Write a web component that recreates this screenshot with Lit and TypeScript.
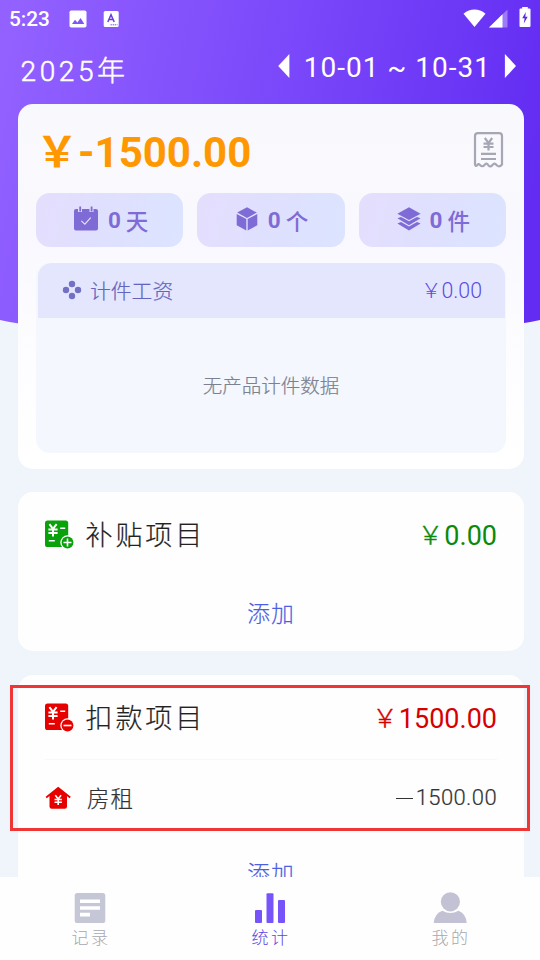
import { LitElement, html, svg, css } from "lit";
import { customElement, property } from "lit/decorators.js";

const yen = (x: number, y: number, s: number, w = 1.8) => svg`
  <g transform="translate(${x} ${y}) scale(${s})" fill="none" stroke="#fff" stroke-width=${w}>
    <path d="M-3.6 -6L0 -1.4L3.6 -6M0 -1.4V6.2M-4.6 -0.6H4.6M-4.6 2.8H4.6"/>
  </g>`;

const billIcon = (color: string, plus: boolean) => html`
  <svg class="bill" width="30" height="30" viewBox="0 0 30 30">
    <rect x="0" y="0.5" width="23.2" height="26.6" rx="2.6" fill=${color} />
    ${yen(8, 10.2, 1, 2)}
    <path d="M15.2 8.2h5M3.8 20.7h6" stroke="#fff" stroke-width="1.5" />
    <circle cx="22.5" cy="22.5" r="7.2" fill="#fff" />
    <circle cx="22.5" cy="22.5" r="5.9" fill=${color} />
    <path d=${plus ? "M18.5 22.5h8M22.5 18.5v8" : "M18.5 22.5h8"} stroke="#fff" stroke-width="1.6" />
  </svg>`;

const calendarIcon = html`
  <svg width="26" height="26" viewBox="0 0 26 26">
    <rect x="1" y="3" width="24" height="21.5" rx="2" fill="#7f6bd6" />
    <path d="M7 1v5M18.5 1v5" stroke="#e2ddfc" stroke-width="4" />
    <path d="M7.2 0.5v5M18.6 0.5v5" stroke="#7f6bd6" stroke-width="1.8" />
    <path d="M8.3 14.8l3.6 3.4 5.8-6.6" fill="none" stroke="#e6e2fd" stroke-width="1.1" />
  </svg>`;

const boxIcon = html`
  <svg width="23" height="24" viewBox="0 0 23 24">
    <path d="M11 0.3L20.8 5.6L11 10.9L1.2 5.6Z" fill="#7f6bd6" />
    <path d="M0.7 7L10.3 12.1V23.4L0.7 18.2ZM21.3 7L11.7 12.1V23.4L21.3 18.2Z" fill="#7f6bd6" />
  </svg>`;

const layersIcon = html`
  <svg width="24" height="24" viewBox="0 0 24 24" fill="#7f6bd6">
    <path d="M12 0.3L23.6 6.7L12 13.1L0.4 6.7Z" />
    <path d="M0.4 11.2L4 9.9L12 14.2L20 9.9L23.6 11.2L12 18.2Z" />
    <path d="M0.4 16.5L4 15L12 19.4L20 15L23.6 16.5L12 23.6Z" />
  </svg>`;

@customElement("stat-pill")
class StatPill extends LitElement {
  @property({ attribute: false }) icon: unknown;
  @property() unit = "";

  static styles = css`
    :host {
      box-sizing: border-box;
      flex: 1;
      height: 54px;
      padding: 0 0 1px 2px;
      border-radius: 14px;
      background: linear-gradient(105deg, #e5defd 0%, #dfe0fe 45%, #dce4fe 100%);
      display: flex;
      justify-content: center;
      align-items: center;
      color: #7f6bd6;
      font: 700 22.5px/54px Roboto, "Noto Sans CJK SC", sans-serif;
    }
    svg {
      display: block;
    }
    .icon {
      display: flex;
      padding-bottom: 2px;
      margin-right: 9px;
    }
    .unit {
      margin-left: 5px;
      font: 500 22.5px/50px "Noto Sans CJK SC", sans-serif;
    }
  `;

  render() {
    return html`<span class="icon">${this.icon}</span><span>0</span><span class="unit">${this.unit}</span>`;
  }
}

@customElement("app-root")
class AppRoot extends LitElement {
  static styles = css`
    :host {
      position: relative;
      display: flex;
      flex-direction: column;
      width: 540px;
      height: 960px;
      overflow: hidden;
      background: #f0f4fb;
      font-family: Roboto, "Noto Sans CJK SC", sans-serif;
    }
    svg {
      display: block;
      flex: none;
    }
    .cjk {
      font-family: "Noto Sans CJK SC", sans-serif;
    }
    .backdrop {
      position: absolute;
      left: -30px;
      right: -30px;
      top: 0;
      height: 338px;
      border-radius: 0 0 50% 50% / 0 0 32px 32px;
      background: linear-gradient(103deg, #9261ff 7%, #7a47fa 50%, #622cf2 90%);
    }
    .status {
      position: relative;
      display: flex;
      align-items: center;
      height: 37px;
      padding: 0 9px 0 9px;
      color: #fff;
      font: 500 20.8px/38px Roboto, sans-serif;
    }
    .status .image {
      margin-left: 19.5px;
    }
    .status .lang {
      margin-left: 16px;
    }
    .status .wifi {
      margin-left: auto;
      margin-top: -2px;
    }
    .status .signal {
      margin-left: 3px;
      margin-top: -2px;
    }
    .status .battery {
      margin-left: 11px;
      margin-top: -3px;
    }
    .period {
      position: relative;
      display: flex;
      justify-content: space-between;
      height: 67px;
      padding: 0 24px 0 20.5px;
      color: #fff;
      font-size: 28px;
      line-height: 32px;
    }
    .year {
      padding-top: 19px;
      letter-spacing: 3.6px;
      font-weight: 300;
      -webkit-text-stroke: 0.5px #fff;
    }
    .range {
      display: flex;
      align-items: center;
      height: 32px;
      padding-top: 13px;
      letter-spacing: 1px;
    }
    .range .dates {
      margin: 4px 13px 0 14px;
      white-space: pre;
    }
    .card {
      position: relative;
      box-sizing: border-box;
      flex: none;
      margin: 0 16px 0 18px;
      border-radius: 15px;
      background: #fefeff;
    }
    .summary {
      height: 365px;
      padding: 0 18px;
      background: linear-gradient(180deg, #f8f9fd, #f9f8fe 35%, #fdfdff 70%, #fff);
    }
    .total {
      display: flex;
      justify-content: space-between;
      height: 89px;
      color: #ff9800;
      padding: 0 2.5px 0 0;
    }
    .total .amount {
      display: flex;
      font: 700 42px/97px Roboto, sans-serif;
    }
    .total .yen {
      width: 42px;
      font: 700 42px/89px "Noto Sans CJK SC", sans-serif;
      text-align: center;
    }
    .total svg {
      margin-top: 27px;
    }
    .pills {
      display: flex;
      gap: 14px;
    }
    .piece {
      margin: 16px 0 0 0;
      border-radius: 14px;
      overflow: hidden;
      background: #f4f7fd;
      height: 190px;
    }
    .piece-head {
      display: flex;
      align-items: center;
      height: 55px;
      box-sizing: border-box;
      margin: 0 1px 0 2px;
      border-radius: 14px 14px 0 0;
      padding: 0 23px 0 24px;
      background: #e4e6fd;
      color: #6364bf;
      font: 300 20.8px/55px "Noto Sans CJK SC", sans-serif;
    }
    .piece-head svg {
      margin-top: -2px;
    }
    .piece-head .name {
      margin-left: 8px;
      -webkit-text-stroke: 0.2px #6364bf;
    }
    .piece-head .sum {
      display: flex;
      margin-left: auto;
      color: #5b4be0;
      font-family: Roboto, sans-serif;
      font-size: 21.3px;
      line-height: 58px;
    }
    .piece-head .sum .cjk {
      font-size: 20.5px;
      line-height: 55px;
    }
    .empty {
      text-align: center;
      color: #7c8191;
      font: 300 19.5px/133px "Noto Sans CJK SC", sans-serif;
      -webkit-text-stroke: 0.2px #7c8191;
    }
    .group {
      padding: 0 27px 0 27px;
    }
    .allowance {
      height: 159px;
      margin-top: 23px;
    }
    .deduction {
      height: 240px;
      margin-top: 24px;
    }
    .row {
      display: flex;
      align-items: center;
      height: 84px;
      box-sizing: border-box;
    }
    .row .bill {
      margin-top: 2px;
    }
    .row .name {
      margin-left: 10.5px;
      color: #222;
      font: 300 27px/40px "Noto Sans CJK SC", sans-serif;
      letter-spacing: 2.9px;
      -webkit-text-stroke: 0.2px #222;
    }
    .row .sum {
      display: flex;
      align-items: center;
      margin-left: auto;
      padding-top: 3px;
      font: 400 27px/40px Roboto, sans-serif;
    }
    .row .sum .cjk {
      font-size: 25.5px;
      font-weight: 300;
      margin: -5px 1px 0 0;
      -webkit-text-stroke: 0.4px currentColor;
    }
    .green {
      color: #0a8a0a;
    }
    .red {
      color: #d60000;
    }
    .item {
      display: flex;
      align-items: center;
      height: 76px;
      border-top: 1px solid #f8f8fa;
    }
    .item .name {
      margin: -3px 0 0 16px;
      color: #333;
      font: 300 22.5px/40px "Noto Sans CJK SC", sans-serif;
      letter-spacing: 1px;
      -webkit-text-stroke: 0.2px #333;
    }
    .item .sum {
      display: flex;
      margin-left: auto;
      color: #333;
      font: 300 22px/40px Roboto, sans-serif;
      letter-spacing: 0.4px;
      -webkit-text-stroke: 0.2px #333;
    }
    .dash {
      width: 17px;
      height: 1px;
      background: #333;
      align-self: center;
      margin-right: 3px;
    }
    .add {
      text-align: center;
      color: #4c5fe0;
      font: 300 22.8px/74px "Noto Sans CJK SC", sans-serif;
      letter-spacing: 1px;
      -webkit-text-stroke: 0.2px #4c5fe0;
    }
    .highlight {
      position: absolute;
      box-sizing: border-box;
      left: 10px;
      top: 685px;
      width: 520px;
      height: 146px;
      border: 3px solid #f03535;
    }
    .tabs {
      position: absolute;
      left: 0;
      right: 0;
      bottom: 0;
      height: 83px;
      display: flex;
      background: #fefefe;
    }
    .tab {
      flex: 1;
      display: flex;
      flex-direction: column;
      align-items: center;
      padding-top: 14px;
      color: #a6a8ae;
      font: 300 17px/24px "Noto Sans CJK SC", sans-serif;
    }
    .tab .label {
      margin-top: 2px;
      padding-left: 2px;
      letter-spacing: 2.6px;
    }
    .tab.active {
      color: #5a48e0;
    }
  `;

  render() {
    return html`
      <div class="backdrop"></div>
      <div class="status">
        <span>5:23</span>
        <svg class="image" width="18" height="18" viewBox="0 0 18 18">
          <rect x="0.5" y="0.5" width="17" height="17" rx="1.8" fill="#fff" />
          <path d="M3 14l3-4.2 2.4 2.6 3.2-4.4L15.3 14z" fill="#8154fb" />
        </svg>
        <svg class="lang" width="16" height="18" viewBox="0 0 16 18">
          <rect x="0.7" y="1" width="15" height="16" rx="1.6" fill="#fff" />
          <path d="M4.8 12L8 4.6L11.2 12M6 9.6h4" fill="none" stroke="#6c3be0" stroke-width="1.5" />
          <path d="M7.5 14.8h7" stroke="#6c3be0" stroke-width="0.9" stroke-dasharray="1.4 0.7" />
        </svg>
        <svg class="wifi" width="23" height="20" viewBox="0 0 23 20">
          <path d="M11.5 19L0.5 5.8C4 2.6 7.5 1.4 11.5 1.4S19 2.6 22.5 5.8Z" fill="#fff" />
        </svg>
        <svg class="signal" width="19" height="20" viewBox="0 0 19 20">
          <path d="M0 19.5L18.5 1.5V19.5Z" fill="#fff" opacity="0.35" />
          <path d="M0 19.5L13.5 6.3V19.5Z" fill="#fff" />
        </svg>
        <svg class="battery" width="12" height="22" viewBox="0 0 12 22">
          <path d="M1.5 2.6H3.2V1H8.8V2.6H10.5Q11.5 2.6 11.5 3.6V20Q11.5 21 10.5 21H1.5Q0.5 21 0.5 20V3.6Q0.5 2.6 1.5 2.6Z" fill="#fff" />
          <path d="M6.8 6L3.2 12.3H5.6L4.8 17.5L8.7 10.8H6.3Z" fill="#5b2ae0" />
        </svg>
      </div>
      <div class="period">
        <div class="year">2025年</div>
        <div class="range">
          <svg width="12" height="24" viewBox="0 0 12 24"><path d="M11.4 0V24L0.2 12Z" fill="#fff" /></svg>
          <span class="dates">10-01 ~ 10-31</span>
          <svg width="12" height="24" viewBox="0 0 12 24"><path d="M0.9 0V24L12 12Z" fill="#fff" /></svg>
        </div>
      </div>

      <section class="card summary">
        <div class="total">
          <div class="amount"><span class="yen">￥</span><span>-1500.00</span></div>
          <svg width="31" height="38" viewBox="0 0 31 38" fill="none" stroke="#a5a7b4" stroke-width="2.2">
            <path d="M2 33.5V5Q2 2.2 4.8 2.2H26.2Q29 2.2 29 5V33.5Q26.5 36.5 24 34.5Q21.5 31 19.5 34Q17.5 36.5 15.5 34.5Q13.5 31 11.5 34Q9.5 36.5 7 34Q5 32 4 34.5Q2.2 35.5 2 33.5Z" />
            <path d="M11.8 7L15.5 12L19.2 7M15.5 12V19.4M10.5 12.6H20.5M10.5 16H20.5" />
            <path d="M8 22.8H23M8 28H23" />
          </svg>
        </div>
        <div class="pills">
          <stat-pill .icon=${calendarIcon} unit="天"></stat-pill>
          <stat-pill .icon=${boxIcon} unit="个"></stat-pill>
          <stat-pill .icon=${layersIcon} unit="件"></stat-pill>
        </div>
        <div class="piece">
          <div class="piece-head">
            <svg width="20" height="20" viewBox="0 0 20 20" fill="#7470c4">
              <circle cx="10" cy="4" r="3.2" /><circle cx="4" cy="10" r="3.2" />
              <circle cx="16" cy="10" r="3.2" /><circle cx="10" cy="16" r="3.2" />
            </svg>
            <span class="name">计件工资</span>
            <span class="sum"><span class="cjk">￥</span><span>0.00</span></span>
          </div>
          <div class="empty">无产品计件数据</div>
        </div>
      </section>

      <section class="card group allowance">
        <div class="row">
          ${billIcon("#09a20b", true)}
          <span class="name">补贴项目</span>
          <span class="sum green"><span class="cjk">￥</span><span>0.00</span></span>
        </div>
        <div class="add">添加</div>
      </section>

      <section class="card group deduction">
        <div class="row">
          ${billIcon("#e60000", false)}
          <span class="name">扣款项目</span>
          <span class="sum red"><span class="cjk">￥</span><span>1500.00</span></span>
        </div>
        <div class="item">
          <svg width="26" height="24" viewBox="0 0 26 24">
            <path d="M1.2 11.5L13.2 1.8L25.2 11.5" fill="none" stroke="#e60000" stroke-width="1.8" />
            <path d="M4.5 9L13.2 1.6L22 9V20.5Q22 22.8 19.7 22.8H6.8Q4.5 22.8 4.5 20.5Z" fill="#e60000" />
            ${yen(13.2, 14, 0.8, 2)}
          </svg>
          <span class="name">房租</span>
          <span class="sum"><span class="dash"></span><span>1500.00</span></span>
        </div>
        <div class="add">添加</div>
      </section>

      <nav class="tabs">
        <div class="tab">
          <svg width="32" height="32" viewBox="0 0 32 32">
            <rect x="0.7" y="2" width="30.6" height="30" rx="2.6" fill="#c5c7d6" />
            <path d="M6 10.3H26M6 17H26M6 23.6H16" stroke="#fff" stroke-width="3.6" />
          </svg>
          <span class="label">记录</span>
        </div>
        <div class="tab active">
          <svg width="32" height="32" viewBox="0 0 32 32" fill="#7654fa">
            <rect x="1" y="19" width="7" height="13" rx="1" />
            <rect x="12.5" y="2.3" width="7" height="29.7" rx="1" />
            <rect x="24" y="9" width="7" height="23" rx="1" />
          </svg>
          <span class="label">统计</span>
        </div>
        <div class="tab">
          <svg width="34" height="32" viewBox="0 0 34 32" fill="#c3c2d4">
            <circle cx="17.4" cy="10.8" r="9.6" />
            <path d="M0.7 32Q1.5 22.5 9.4 19.7Q17.4 24.5 25.4 19.7Q33 22.5 33.7 32Z" />
          </svg>
          <span class="label">我的</span>
        </div>
      </nav>

      <div class="highlight"></div>
    `;
  }
}
